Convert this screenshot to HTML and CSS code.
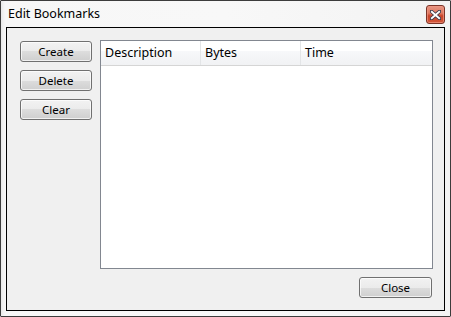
FILE: index.html
```html
<!DOCTYPE html>
<html>
<head>
<meta charset="utf-8">
<link rel="stylesheet" href="styles.css">
</head>
<body>
<div class="window">
  <div class="titlebar">
    <span class="title">Edit Bookmarks</span>
    <button class="close-x" aria-label="Close">
      <svg width="11" height="10" viewBox="0 0 11 10">
        <path d="M1.5 1.5 L9.5 8.5 M9.5 1.5 L1.5 8.5" stroke="#3a3a4a" stroke-width="3.6" stroke-linecap="square"/>
        <path d="M1.8 1.8 L9.2 8.2 M9.2 1.8 L1.8 8.2" stroke="#ffffff" stroke-width="1.8" stroke-linecap="square"/>
      </svg>
    </button>
  </div>
  <div class="client">
    <div class="main">
      <div class="actions">
        <button class="btn">Create</button>
        <button class="btn">Delete</button>
        <button class="btn">Clear</button>
      </div>
      <div class="list">
        <div class="list-header">
          <div class="col col-desc">Description</div>
          <div class="col col-bytes">Bytes</div>
          <div class="col col-time">Time</div>
        </div>
        <div class="list-body"></div>
      </div>
    </div>
    <div class="footer">
      <button class="btn btn-close">Close</button>
    </div>
  </div>
</div>
</body>
</html>
```

FILE: styles.css
```css
html, body {
  margin: 0;
  padding: 0;
  background: #ffffff;
}

body {
  font-family: "Noto Sans", "Open Sans", sans-serif;
  font-size: 12px;
  color: #000;
}

.window {
  box-sizing: border-box;
  width: 451px;
  height: 317px;
  border: 1px solid #3c3c3c;
  border-radius: 1px;
  background: linear-gradient(90deg, #e9e9e9 0px, #f7f7f7 4px, #f8f8f8 50%, #f3f3f3 100%);
  display: flex;
  flex-direction: column;
}

.titlebar {
  height: 26px;
  display: flex;
  align-items: flex-start;
  justify-content: space-between;
  padding: 0 5px 0 7px;
}

.title {
  font-size: 12.5px;
  line-height: 16px;
  margin-top: 5px;
  color: #000;
}

.close-x {
  box-sizing: border-box;
  width: 19px;
  height: 19px;
  margin-top: 4px;
  padding: 0;
  border: 1px solid #7a3428;
  border-radius: 3px;
  background: linear-gradient(180deg, #e79684 0%, #df7a62 42%, #c8442a 58%, #d2573a 100%);
  box-shadow: inset 0 0 0 1px rgba(240, 150, 130, 0.7);
  display: flex;
  align-items: center;
  justify-content: center;
}

.client {
  flex: 1;
  margin: 0 5px 5px 5px;
  border: 1px solid #000;
  background: #f0f0f0;
  padding: 12px 11px 12px 13px;
  display: flex;
  flex-direction: column;
}

.main {
  flex: 1;
  display: flex;
  gap: 8px;
  align-items: flex-start;
}

.actions {
  width: 72px;
  display: flex;
  flex-direction: column;
  gap: 8px;
  padding-top: 1px;
}

.btn {
  box-sizing: border-box;
  height: 21px;
  width: 72px;
  padding: 0;
  border: 1px solid #707070;
  border-radius: 3px;
  background: linear-gradient(180deg, #f2f2f2 0%, #ebebeb 50%, #dddddd 50%, #cfcfcf 100%);
  box-shadow: inset 0 0 0 1px rgba(255, 255, 255, 0.7);
  font-family: "Noto Sans", "Open Sans", sans-serif;
  font-size: 11.5px;
  line-height: 17px;
  color: #000;
}

.list {
  flex: 1;
  border: 1px solid #828790;
  background: #ffffff;
  display: flex;
  flex-direction: column;
  height: 229px;
  box-sizing: border-box;
}

.list-header {
  height: 24px;
  display: flex;
  background: linear-gradient(180deg, #ffffff 0%, #ffffff 40%, #f7f8fa 41%, #f1f2f4 100%);
  border-bottom: 1px solid #d5d5d5;
}

.col {
  box-sizing: border-box;
  width: 100px;
  padding-left: 4px;
  line-height: 24px;
  font-size: 12.5px;
  border-right: 1px solid #e3e5e7;
}

.col-time {
  flex: 1;
  border-right: none;
}

.list-body {
  flex: 1;
}

.footer {
  display: flex;
  justify-content: flex-end;
  padding-top: 8px;
  padding-right: 1px;
}

.btn-close {
  width: 73px;
}
```
